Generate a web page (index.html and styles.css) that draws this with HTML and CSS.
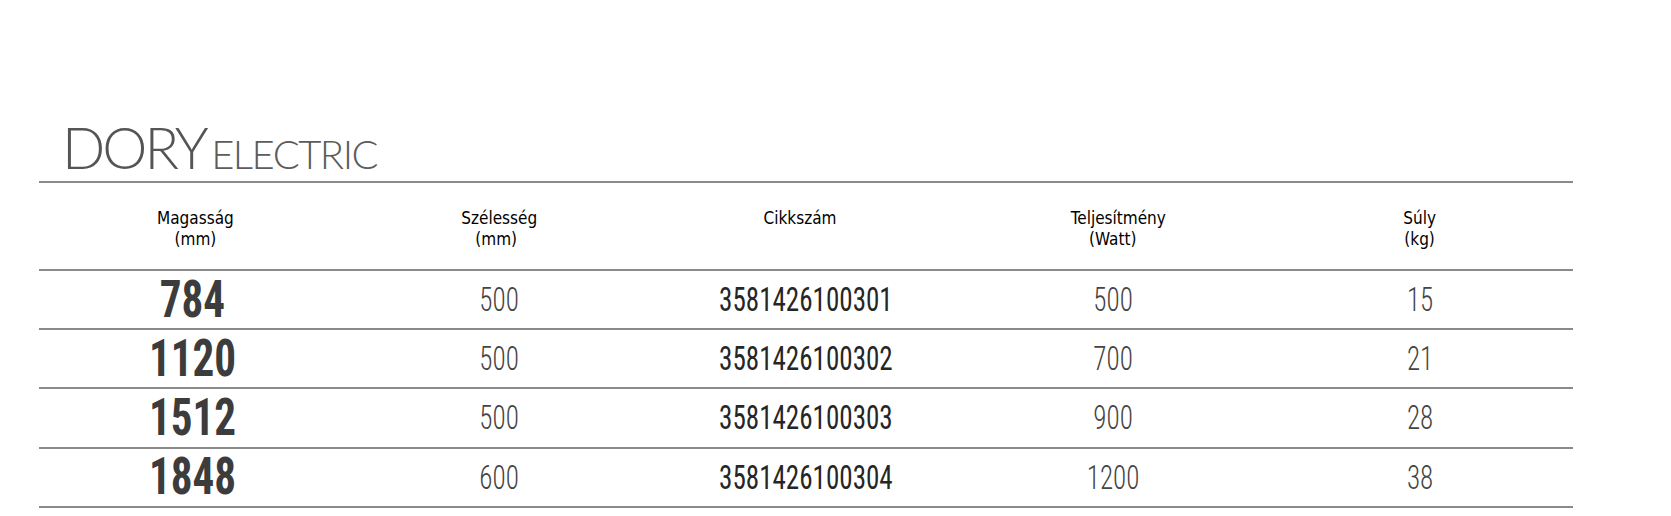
FILE: index.html
```html
<!DOCTYPE html>
<html lang="hu">
<head>
<meta charset="utf-8">
<title>DORY ELECTRIC</title>
<link rel="stylesheet" href="styles.css">
</head>
<body>
<div class="sheet">
  <h1 class="title"><span class="main">DORY</span><span class="sub"> ELECTRIC</span></h1>
  <div class="table">
    <div class="row head">
      <div class="cell c1">Magasság<br>(mm)</div>
      <div class="cell c2"><span class="ln">Szélesség</span><span class="ln pad-r">(mm)</span></div>
      <div class="cell c3">Cikkszám</div>
      <div class="cell c4"><span class="ln pad-l">Teljesítmény</span><span class="ln">(Watt)</span></div>
      <div class="cell c5">Súly<br>(kg)</div>
    </div>
    <div class="row">
      <div class="cell"><span class="num big">784</span></div>
      <div class="cell"><span class="num light">500</span></div>
      <div class="cell"><span class="num code">3581426100301</span></div>
      <div class="cell"><span class="num light">500</span></div>
      <div class="cell"><span class="num light">15</span></div>
    </div>
    <div class="row">
      <div class="cell"><span class="num big">1120</span></div>
      <div class="cell"><span class="num light">500</span></div>
      <div class="cell"><span class="num code">3581426100302</span></div>
      <div class="cell"><span class="num light">700</span></div>
      <div class="cell"><span class="num light">21</span></div>
    </div>
    <div class="row">
      <div class="cell"><span class="num big">1512</span></div>
      <div class="cell"><span class="num light">500</span></div>
      <div class="cell"><span class="num code">3581426100303</span></div>
      <div class="cell"><span class="num light">900</span></div>
      <div class="cell"><span class="num light">28</span></div>
    </div>
    <div class="row">
      <div class="cell"><span class="num big">1848</span></div>
      <div class="cell"><span class="num light">600</span></div>
      <div class="cell"><span class="num code">3581426100304</span></div>
      <div class="cell"><span class="num light">1200</span></div>
      <div class="cell"><span class="num light">38</span></div>
    </div>
  </div>
</div>
</body>
</html>
```
FILE: styles.css
```css
* { box-sizing: border-box; }
html, body { margin: 0; padding: 0; background: #ffffff; }

.sheet {
  width: 1534px;
  margin-left: 39px;
}

.title {
  margin: 0;
  padding: 119px 0 5px 23px;
  font-family: Lato, "Liberation Sans", sans-serif;
  font-weight: 300;
  font-size: 57px;
  line-height: 1;
  color: #555555;
  border-bottom: 2px solid #8a8a8a;
}

.main {
  letter-spacing: -3px;
}

.sub {
  font-size: 40px;
  letter-spacing: -1.5px;
  word-spacing: -4px;
  color: #5c5c5c;
}

.row {
  display: grid;
  grid-template-columns: repeat(5, 1fr);
  align-items: center;
  height: 59.2px;
  border-bottom: 2px solid #8a8a8a;
}

.cell {
  text-align: center;
}

.head {
  height: 88px;
  align-items: start;
  padding-top: 25px;
  font-family: "DejaVu Sans Condensed", "DejaVu Sans", sans-serif;
  font-stretch: condensed;
  font-size: 17px;
  line-height: 20.5px;
  color: #000000;
}

.ln { display: block; }
.pad-l { padding-left: 11px; }
.pad-r { padding-right: 6px; }
.head .c1 { padding-left: 6px; }
.head .c3 { padding-right: 12px; }

.num {
  display: inline-block;
  font-family: "Roboto Condensed", Roboto, sans-serif;
  font-stretch: condensed;
  line-height: 1;
  transform: scaleX(0.82);
}

.big {
  font-size: 52px;
  font-weight: 700;
  color: #3c3c3c;
  transform: scaleX(0.83);
}

.light {
  font-size: 33px;
  font-weight: 300;
  color: #444444;
}

.code {
  font-size: 33px;
  font-weight: 400;
  color: #262626;
}
```
